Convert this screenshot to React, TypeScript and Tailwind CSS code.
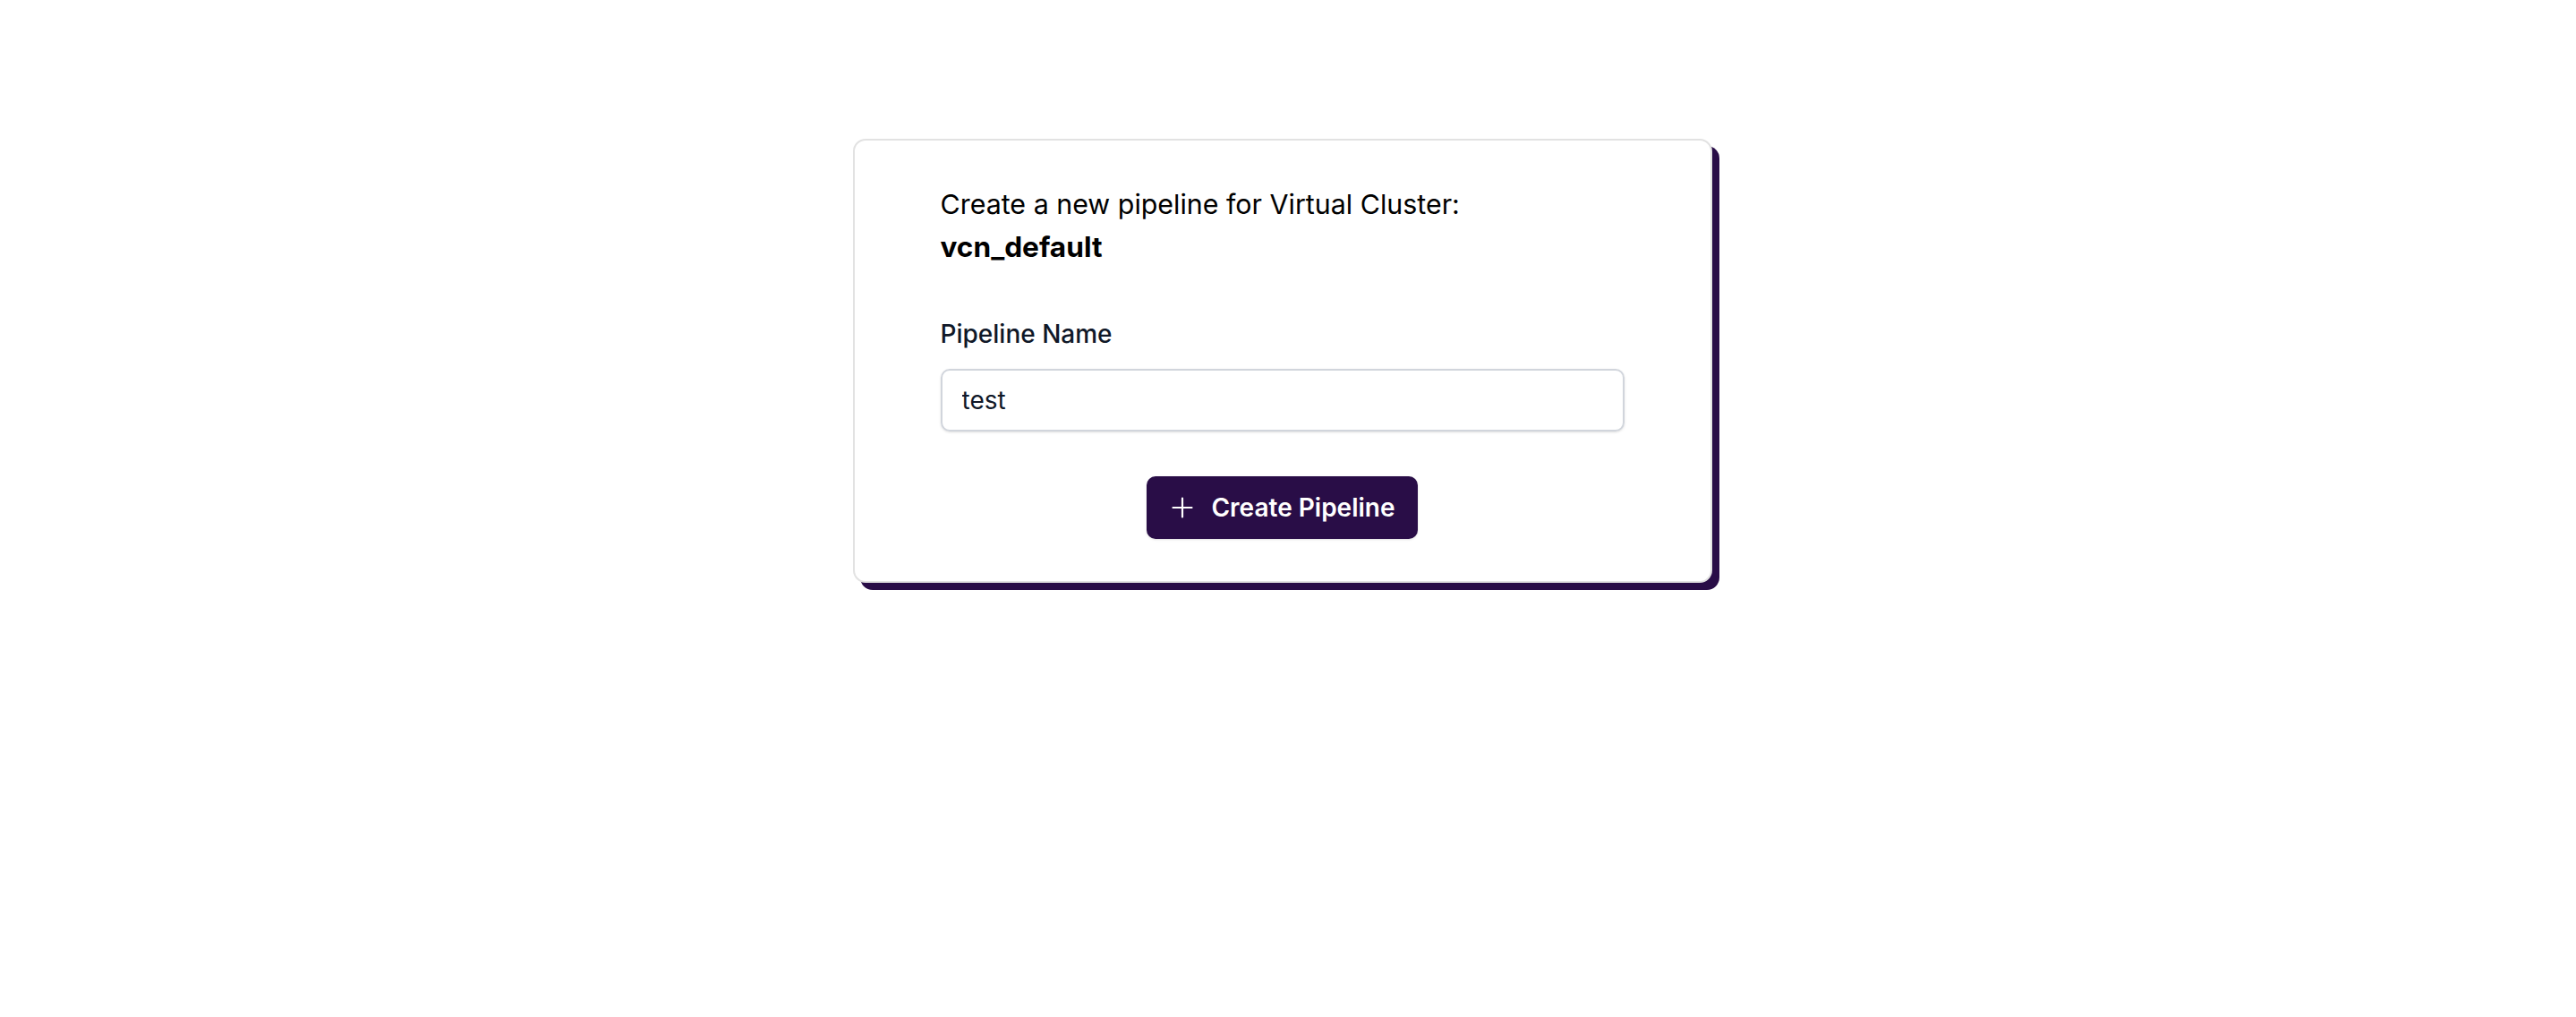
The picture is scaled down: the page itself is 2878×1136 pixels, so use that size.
export default function App() {
  return (
    <div className="min-h-screen bg-white font-['Inter',sans-serif] text-black">
      <div className="flex justify-center pt-[155px]">
        <div className="mr-[13px] w-[960px] rounded-[14px] border-2 border-[#e2e2e2] bg-white px-[96px] pt-[48px] pb-[47px] shadow-[8px_8px_0_0_#290d47]">
          <h2 className="text-[30.4px] leading-[47px] font-normal">
            Create a new pipeline for Virtual Cluster:
            <br />
            <span className="text-[31.6px] font-bold">vcn_default</span>
          </h2>

          <label className="mt-[55px] block text-[28px] leading-[36px] font-medium text-gray-900">
            Pipeline Name
          </label>
          <input
            type="text"
            defaultValue="test"
            className="mt-[21px] block h-[70px] w-full rounded-[10px] border-2 border-gray-300 px-[22px] text-[28px] text-gray-900 shadow-sm focus:outline-none"
          />

          <div className="mt-[50px] flex justify-center">
            <button className="flex h-[70px] items-center gap-[20px] rounded-[10px] bg-[#290d47] pr-[25px] pl-[28px] text-[28px] font-semibold text-white shadow-sm">
              <svg width="24" height="24" viewBox="0 0 24 24" fill="none" stroke="currentColor" strokeWidth="2.2" strokeLinecap="round">
                <path d="M12 1.5v21M1.5 12h21" />
              </svg>
              Create Pipeline
            </button>
          </div>
        </div>
      </div>
    </div>
  );
}
